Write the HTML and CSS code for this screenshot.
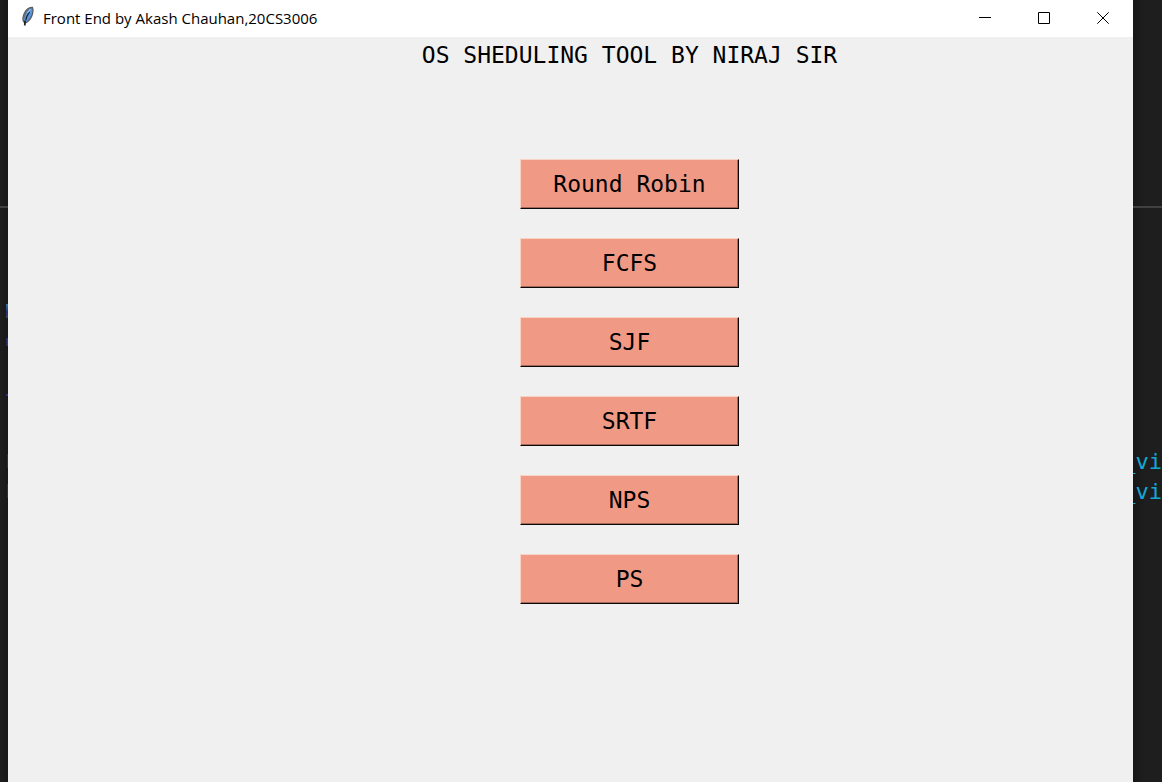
FILE: index.html
```
<!DOCTYPE html>
<html lang="en">
<head>
<meta charset="utf-8">
<title>Front End by Akash Chauhan,20CS3006</title>
<link rel="stylesheet" href="styles.css">
</head>
<body>
<div class="desktop">
  <div class="editor editor-left" aria-hidden="true">
    <div class="divider"></div>
    <i class="speck speck-tall"></i>
    <i class="speck speck-short"></i>
    <i class="speck speck-dot"></i>
    <i class="speck speck-faint"></i>
    <i class="speck speck-faint"></i>
  </div>
  <main class="window">
    <header class="titlebar">
      <svg class="feather" viewBox="0 0 14 22" aria-hidden="true">
        <path d="M11.500 1.500C8 1.500 5 4 3.500 7C2 10 1.500 13 2.500 15.500L4.500 17C8 15 10.500 11.500 11.500 8C12.200 5.500 12.300 3 11.500 1.500Z" fill="#5c96dc" stroke="#5a5d62" stroke-width="1.300"/>
        <path d="M2.500 15.500C1.600 12 3 8 5 5C6.500 3 8 2 10 1.500L6 5.500L4 10Z" fill="#6b6e72"/>
        <path d="M8.500 6L5.800 10.500L4.800 14" fill="none" stroke="#16283f" stroke-width="1.300"/>
        <path d="M4 14.500L3.800 19.500" stroke="#222" stroke-width="1.800"/>
        <path d="M9.500 3L6.500 7" stroke="#a9c8f0" stroke-width="1"/>
      </svg>
      <h1 class="caption">Front End by Akash Chauhan,20CS3006</h1>
      <div class="controls">
        <button class="control" aria-label="Minimize"><svg viewBox="0 0 12 12"><path d="M0 5.500H12"/></svg></button>
        <button class="control" aria-label="Maximize"><svg viewBox="0 0 12 12"><path d="M.5 .5H11.500V11.500H.5Z"/></svg></button>
        <button class="control" aria-label="Close"><svg viewBox="0 0 12 12"><path d="M.3 .3L11.700 11.700M11.700 .3L.3 11.700"/></svg></button>
      </div>
    </header>
    <section class="content">
      <h2 class="heading">OS SHEDULING TOOL BY NIRAJ SIR</h2>
      <nav class="menu">
        <button class="choice">Round Robin</button>
        <button class="choice">FCFS</button>
        <button class="choice">SJF</button>
        <button class="choice">SRTF</button>
        <button class="choice">NPS</button>
        <button class="choice">PS</button>
      </nav>
    </section>
  </main>
  <div class="editor editor-right" aria-hidden="true">
    <div class="divider"></div>
    <div class="code">
      <span>_vi</span>
      <span>_vi</span>
    </div>
  </div>
</div>
</body>
</html>
```
FILE: styles.css
```
* { box-sizing: border-box; }

body {
  margin: 0;
  background: #1e1e1e;
}

.desktop {
  display: grid;
  grid-template-columns: 8px minmax(0, 1fr) 29px;
  min-height: 100vh;
}

.editor {
  display: flex;
  flex-direction: column;
  padding-top: 206px;
  overflow: hidden;
}

.editor-left { background: linear-gradient(to right, #1e1e1e, #181818); }
.editor-right { background: linear-gradient(to right, #171717, #1e1e1e 12px); }

.divider {
  flex: none;
  height: 2px;
  background: #404040;
}

.speck {
  align-self: flex-end;
  flex: none;
  width: 2px;
}

.speck-tall {
  height: 14px;
  margin-top: 96px;
  background: linear-gradient(#2878a0, #2b2b78 60%, #3a4452);
}

.speck-short {
  height: 8px;
  margin-top: 20px;
  background: linear-gradient(to right, #23235c, #38465a);
}

.speck-dot {
  height: 2px;
  margin-top: 48px;
  background: #33338c;
}

.speck-faint {
  width: 1px;
  height: 14px;
  margin-top: 58px;
  background: #26324a;
}

.speck-faint + .speck-faint { margin-top: 16px; }

.code {
  display: flex;
  flex-direction: column;
  align-items: flex-end;
  margin-top: 239px;
  color: #12a8d6;
  font: 22px/30px "DejaVu Sans Mono", monospace;
}

.window {
  display: flex;
  flex-direction: column;
  background: #f0f0f0;
}

.titlebar {
  display: flex;
  align-items: center;
  height: 37px;
  padding-left: 13px;
  background: #fff;
}

.feather {
  width: 14px;
  height: 22px;
  margin-bottom: 3px;
}

.caption {
  flex: 1;
  margin: 0 0 0 8px;
  padding-bottom: 2px;
  color: #000;
  font: 400 15px/20px "Open Sans", "Noto Sans", sans-serif;
}

.controls {
  display: flex;
  height: 36px;
  align-self: flex-start;
  padding-right: 1px;
}

.control {
  display: grid;
  place-items: center;
  width: 59px;
  padding: 0;
  border: 0;
  background: none;
}

.control svg {
  width: 12px;
  height: 12px;
  fill: none;
  stroke: #000;
}

.content {
  display: flex;
  flex-direction: column;
  align-items: center;
  gap: 86px;
  padding: 0 0 28px 118px;
}

.heading {
  margin: 0;
  color: #000;
  font: 400 23px/36px "DejaVu Sans Mono", monospace;
}

.menu {
  display: grid;
  gap: 29px;
}

.choice {
  width: 219px;
  height: 50px;
  padding: 0;
  border: 1px solid;
  border-color: #f8d3c4 #0c0808 #0c0808 #f8d3c4;
  box-shadow: inset -1px -1px #a5695c;
  background: #f09a86;
  color: #000;
  font: 23px/28px "DejaVu Sans Mono", monospace;
}
```
